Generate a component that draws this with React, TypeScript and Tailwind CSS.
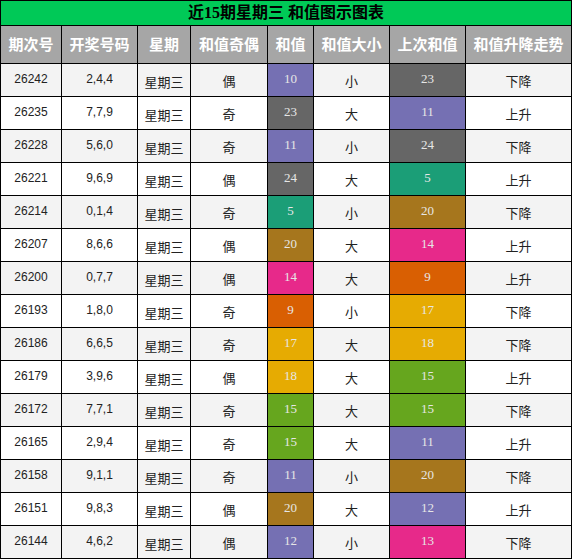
import React from "react";

const C: Record<string, string> = {
  purple: "bg-[#7570b3]",
  gray: "bg-[#666666]",
  teal: "bg-[#1b9e77]",
  brown: "bg-[#a6761d]",
  pink: "bg-[#e7298a]",
  orange: "bg-[#d95f02]",
  yellow: "bg-[#e6ab02]",
  green: "bg-[#66a61e]",
};

type Row = [string, string, string, number, string, string, number, string, string];

const rows: Row[] = [
  ["26242", "2,4,4", "偶", 10, "purple", "小", 23, "gray", "下降"],
  ["26235", "7,7,9", "奇", 23, "gray", "大", 11, "purple", "上升"],
  ["26228", "5,6,0", "奇", 11, "purple", "小", 24, "gray", "下降"],
  ["26221", "9,6,9", "偶", 24, "gray", "大", 5, "teal", "上升"],
  ["26214", "0,1,4", "奇", 5, "teal", "小", 20, "brown", "下降"],
  ["26207", "8,6,6", "偶", 20, "brown", "大", 14, "pink", "上升"],
  ["26200", "0,7,7", "偶", 14, "pink", "大", 9, "orange", "上升"],
  ["26193", "1,8,0", "奇", 9, "orange", "小", 17, "yellow", "下降"],
  ["26186", "6,6,5", "奇", 17, "yellow", "大", 18, "yellow", "下降"],
  ["26179", "3,9,6", "偶", 18, "yellow", "大", 15, "green", "上升"],
  ["26172", "7,7,1", "奇", 15, "green", "大", 15, "green", "下降"],
  ["26165", "2,9,4", "奇", 15, "green", "大", 11, "purple", "上升"],
  ["26158", "9,1,1", "奇", 11, "purple", "小", 20, "brown", "下降"],
  ["26151", "9,8,3", "偶", 20, "brown", "大", 12, "purple", "上升"],
  ["26144", "4,6,2", "偶", 12, "purple", "小", 13, "pink", "下降"],
];

const headers = ["期次号", "开奖号码", "星期", "和值奇偶", "和值", "和值大小", "上次和值", "和值升降走势"];

const cjk = "font-['Noto_Sans_CJK_SC',sans-serif]";
const num = "font-['Liberation_Sans','Noto_Sans_CJK_SC',sans-serif]";
const serif = "font-['Liberation_Serif','Noto_Sans_CJK_SC',serif]";

export default function App() {
  return (
    <div className="w-[572px] h-[559px] bg-black p-px grid grid-cols-[60px_75px_52px_76px_45px_75px_75px_105px] grid-rows-[24px_37px_repeat(15,32px)] gap-px">
      <div className={`col-span-8 bg-[#00c957] flex items-center justify-center text-[16px] font-bold text-black ${serif}`}>
        近15期星期三 和值图示图表
      </div>
      {headers.map((h) => (
        <div key={h} className={`bg-[#a6a6a6] flex items-center justify-center text-white text-[15px] font-bold ${cjk}`}>
          {h}
        </div>
      ))}
      {rows.map((r, i) => {
        const bg = i % 2 === 0 ? "bg-[#f3f3f3]" : "bg-white";
        const base = `${bg} flex items-center justify-center text-[#222]`;
        return (
          <React.Fragment key={r[0]}>
            <div className={`${base} ${num} text-[12px] pb-[2px]`}>{r[0]}</div>
            <div className={`${base} ${num} text-[12px] pb-[2px]`}>{r[1]}</div>
            <div className={`${base} ${cjk} text-[13px] pt-[3px]`}>星期三</div>
            <div className={`${base} ${cjk} text-[13px] pt-[2px]`}>{r[2]}</div>
            <div className={`${C[r[4]]} flex items-center justify-center text-[#e6e6e6] text-[13px] pb-[2px] ${serif}`}>{r[3]}</div>
            <div className={`${base} ${cjk} text-[13px] pt-[2px]`}>{r[5]}</div>
            <div className={`${C[r[7]]} flex items-center justify-center text-[#e6e6e6] text-[13px] pb-[2px] ${serif}`}>{r[6]}</div>
            <div className={`${base} ${cjk} text-[13px] pt-[2px]`}>{r[8]}</div>
          </React.Fragment>
        );
      })}
    </div>
  );
}
